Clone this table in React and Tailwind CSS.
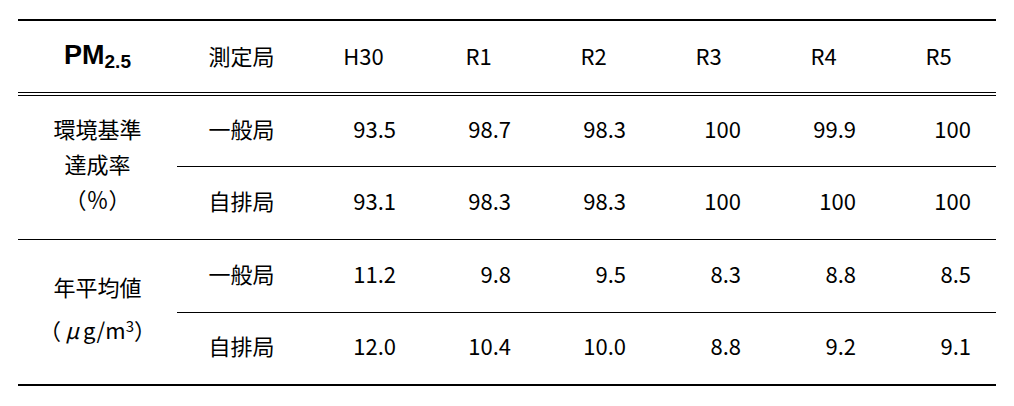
import React from "react";

const years = ["H30", "R1", "R2", "R3", "R4", "R5"];

// full-width brackets kept at full width even when the browser trims them
const Open = () => <span className="inline-block w-[22px] text-right">（</span>;
const Close = () => <span className="inline-block w-[22px] text-left">）</span>;

const groups = [
  {
    gap: "gap-0",
    label: [
      <span key="a">環境基準</span>,
      <span key="b">達成率</span>,
      <span key="c">
        <Open />
        <span className="inline-block w-[22px] text-center">％</span>
        <Close />
      </span>,
    ],
    rows: [
      { station: "一般局", values: ["93.5", "98.7", "98.3", "100", "99.9", "100"] },
      { station: "自排局", values: ["93.1", "98.3", "98.3", "100", "100", "100"] },
    ],
  },
  {
    gap: "gap-[8px]",
    label: [
      <span key="a">年平均値</span>,
      <span key="b">
        <Open />
        <span className="inline-block w-[22px] text-center italic">μ</span>
        g/m<sup className="text-[15px]">3</sup>
        <Close />
      </span>,
    ],
    rows: [
      { station: "一般局", values: ["11.2", "9.8", "9.5", "8.3", "8.8", "8.5"] },
      { station: "自排局", values: ["12.0", "10.4", "10.0", "8.8", "9.2", "9.1"] },
    ],
  },
];

const App = () => {
  return (
    <div
      className="w-[1014px] h-[406px] bg-white text-black pt-[19px] pl-[18px]"
      style={{ fontFamily: '"Noto Sans CJK JP", "Noto Sans", sans-serif' }}
    >
      <table className="w-[978px] table-fixed border-separate border-spacing-0 text-[22px]">
        <colgroup>
          <col className="w-[159px]" />
          <col className="w-[129px]" />
          {years.map((y) => (
            <col key={y} className="w-[115px]" />
          ))}
        </colgroup>
        <thead>
          <tr className="h-[77px]">
            <th className="border-t-2 border-b-4 border-double border-black p-0 pb-[3px] font-normal">
              <span className="font-bold text-[27px]" style={{ fontFamily: '"Liberation Sans", Arial, sans-serif' }}>
                PM<sub className="text-[19px] relative top-[4px]">2.5</sub>
              </span>
            </th>
            <th className="border-t-2 border-b-4 border-double border-black p-0 pb-[3px] font-normal">測定局</th>
            {years.map((y) => (
              <th key={y} className="border-t-2 border-b-4 border-double border-black p-0 pb-[3px] font-normal">
                {y}
              </th>
            ))}
          </tr>
        </thead>
        <tbody>
          {groups.map((g, gi) =>
            g.rows.map((r, ri) => {
              const last = ri === g.rows.length - 1;
              const lastGroup = gi === groups.length - 1;
              const line = last && lastGroup ? "border-b-2" : "border-b";
              return (
                <tr key={`${gi}-${ri}`} className={ri === 0 && gi === 0 ? "h-[71px]" : "h-[73px]"}>
                  {ri === 0 && (
                    <td
                      rowSpan={g.rows.length}
                      className={`${lastGroup ? "border-b-2" : "border-b"} border-black p-0 pb-[8px] text-center`}
                    >
                      <div className={`flex flex-col items-center leading-[35px] ${g.gap}`}>{g.label}</div>
                    </td>
                  )}
                  <td className={`${line} border-black p-0 pb-[6px] text-center`}>{r.station}</td>
                  {r.values.map((v, vi) => (
                    <td key={vi} className={`${line} border-black p-0 pb-[6px] pr-[25px] text-right`}>
                      {v}
                    </td>
                  ))}
                </tr>
              );
            })
          )}
        </tbody>
      </table>
    </div>
  );
};

export default App;
